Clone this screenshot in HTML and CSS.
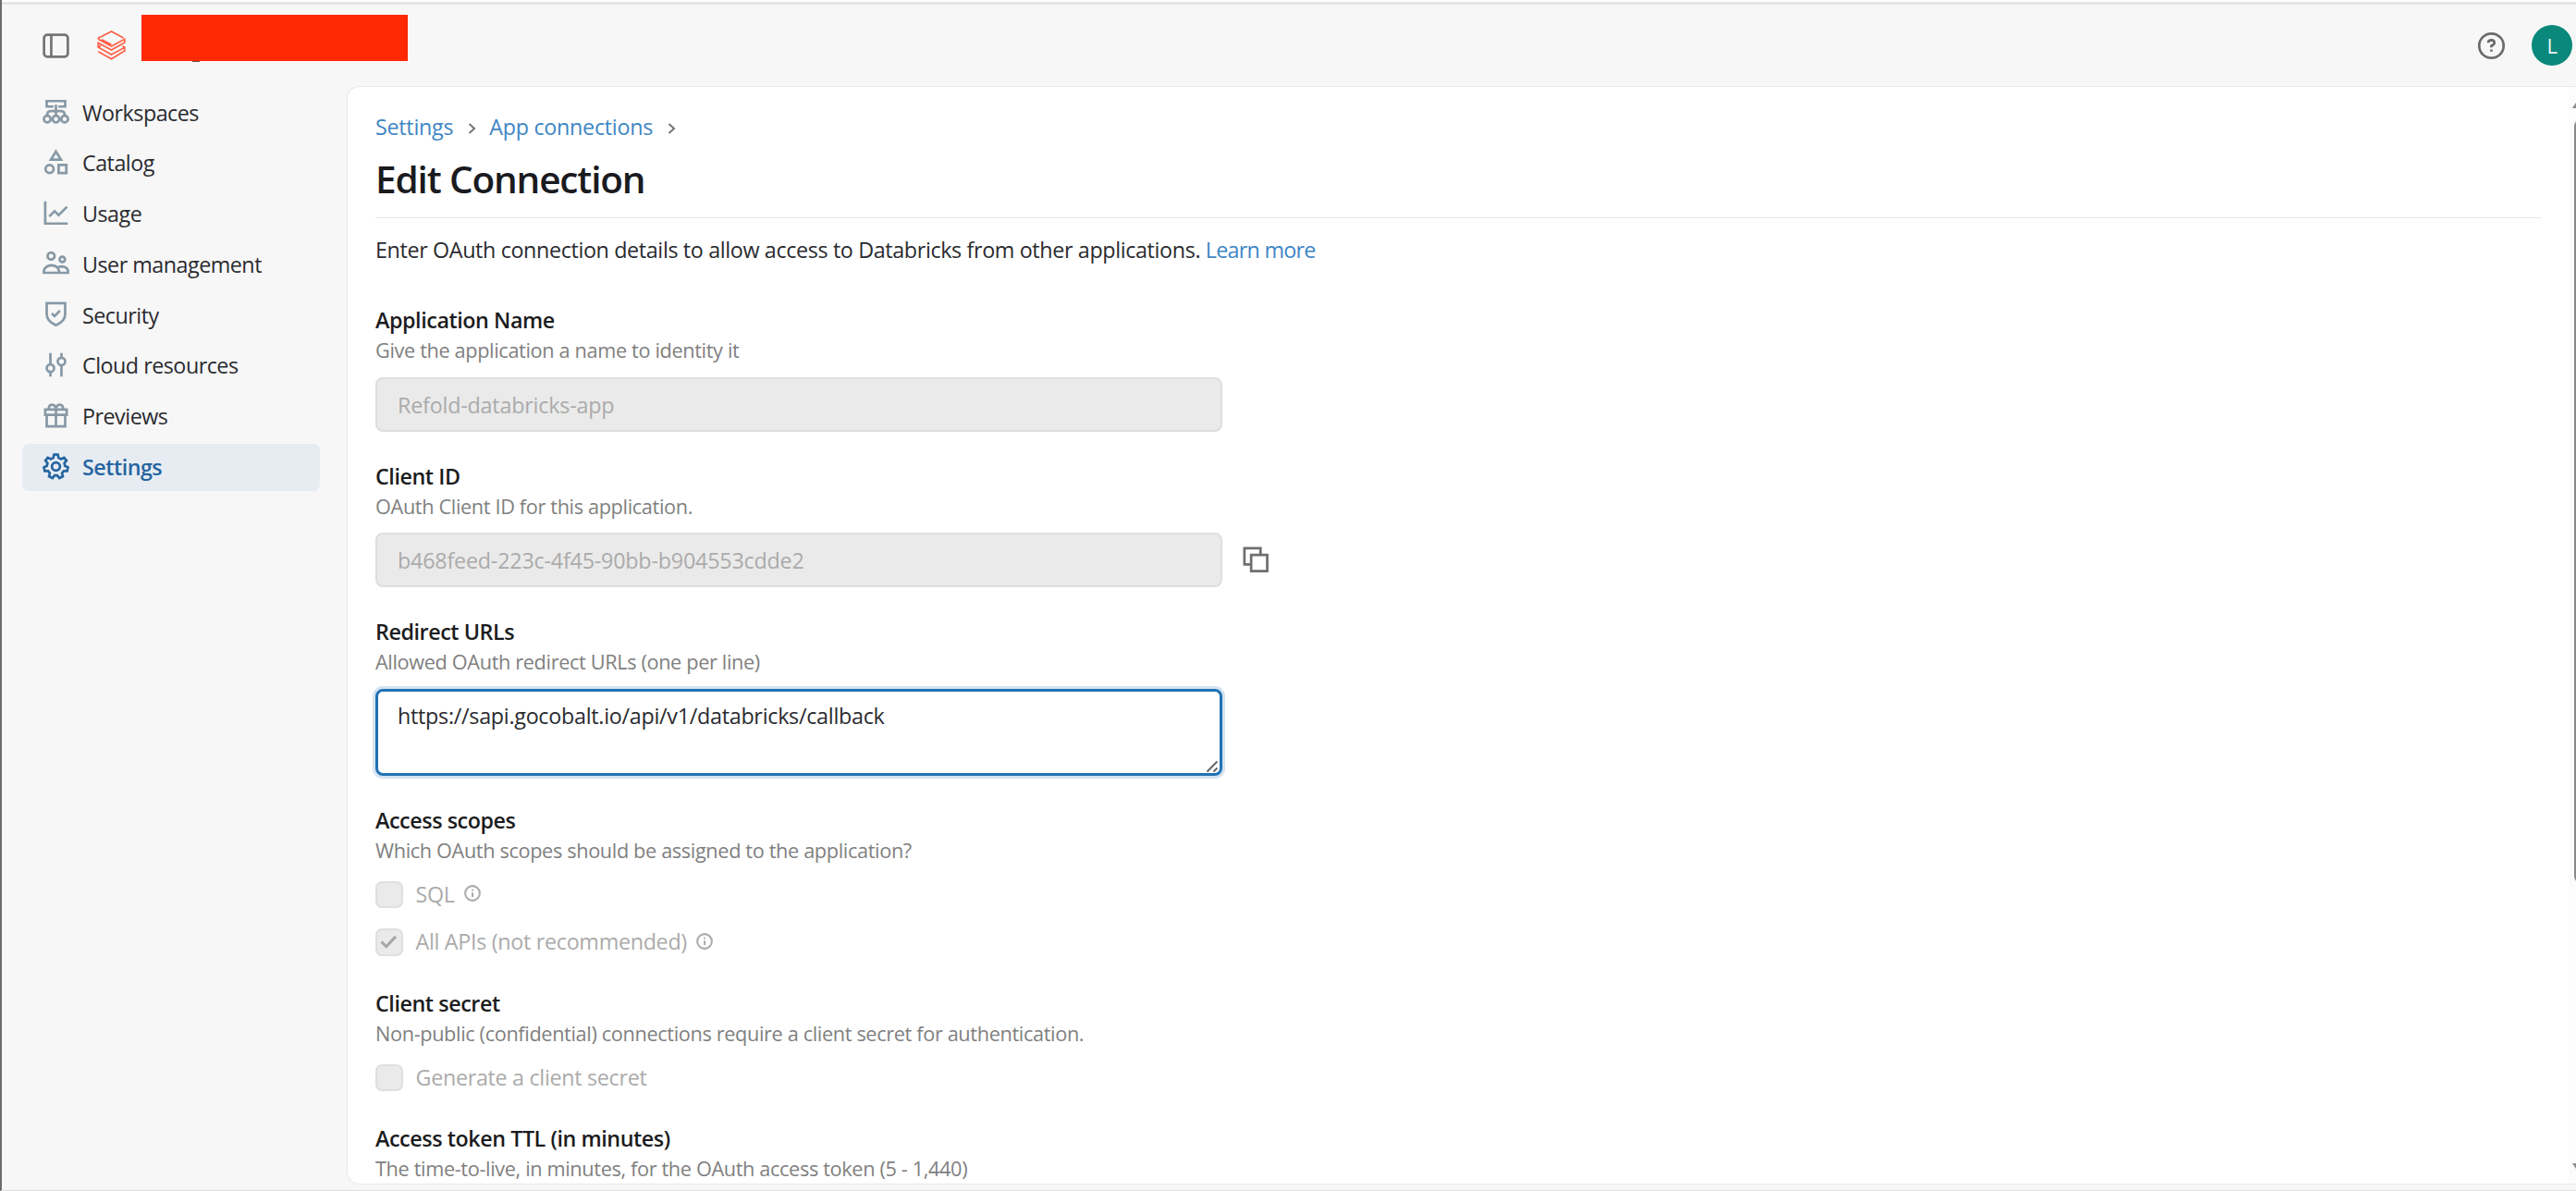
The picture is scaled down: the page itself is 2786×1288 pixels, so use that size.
FILE: index.html
```html
<!DOCTYPE html>
<html lang="en">
<head>
  <meta charset="UTF-8" />
  <title>Edit Connection</title>
  <link rel="stylesheet" href="styles.css">
</head>
<body>
  <header class="topbar">
    <svg class="icon toggle" viewBox="0 0 16 16"><rect x="0.9" y="1.5" width="14.2" height="13" rx="2"/><path d="M5.2 1.5V14.5"/></svg>
    <svg class="logo" viewBox="0 0 92 96"><path d="M3 28V25L46 3L85 24M3 28L46 51L89 28V39L46 63L3 40V54L46 78L89 55V66L46 92L3 68M14 29L46 46M3 40L46 63M3 54L12 49M89 55L82 50"/></svg>
    <div class="redacted"></div>
    <svg class="icon help" viewBox="0 0 16 16"><circle cx="8" cy="8" r="7.3"/><path d="M6.1 6.2Q6.2 4.6 8 4.6Q9.8 4.7 9.8 6.2Q9.8 7.3 8 8V8.9M8 10.2V11.4"/></svg>
    <div class="avatar">L</div>
  </header>

  <div class="layout">
    <!-- Sidebar -->
    <nav class="sidebar">
      <a class="nav-item"><svg class="icon" viewBox="0 0 16 16"><path d="M6.6 5.1H2.5V1.8H13.5V5.1H9.4M8 4V10.4M2.7 10.4Q2.7 7.8 5 7.8H11Q13.3 7.8 13.3 10.4"/><circle cx="2.8" cy="12.5" r="2"/><circle cx="8" cy="12.5" r="2"/><circle cx="13.2" cy="12.5" r="2"/></svg><span>Workspaces</span></a>
      <a class="nav-item"><svg class="icon" viewBox="0 0 16 16"><path d="M8 1.6L11 6.4H5ZM9.6 9.6H14.2V14.4H9.6Z"/><circle cx="4.2" cy="12" r="2.4"/></svg><span>Catalog</span></a>
      <a class="nav-item"><svg class="icon" viewBox="0 0 16 16"><path d="M1.6 1V14.2H15M4 10L7.2 6.8L9.6 9.2L14.6 4.2"/></svg><span>Usage</span></a>
      <a class="nav-item"><svg class="icon" viewBox="0 0 16 16"><circle cx="5.1" cy="3.8" r="2.1"/><circle cx="11.8" cy="5.8" r="1.6"/><path d="M0.8 13.8V12.6Q1.6 9.5 5.3 9.3Q9 9.5 9.8 12.4V13.8ZM8.6 10.8Q10 10 11.6 10Q14.4 10.2 15.2 12.4V13.8H9.8"/></svg><span>User management</span></a>
      <a class="nav-item"><svg class="icon" viewBox="0 0 16 16"><path d="M2.5 1.6H13.5V8Q13.5 12.4 8 14.8Q2.5 12.4 2.5 8ZM5.5 7.7L7.2 9.3L10.4 6.1"/></svg><span>Security</span></a>
      <a class="nav-item"><svg class="icon" viewBox="0 0 16 16"><path d="M4.7 1V7.7M4.7 12.3V15M11.3 1V3.7M11.3 8.3V15"/><circle cx="4.7" cy="10" r="2.2"/><circle cx="11.3" cy="6" r="2.2"/></svg><span>Cloud resources</span></a>
      <a class="nav-item"><svg class="icon" viewBox="0 0 16 16"><path d="M1.6 4.4H14.4V7.5H1.6ZM2.5 7.5V14.4H13.5V7.5M8 4.4V14.4M8 4.4Q7.8 1.5 5.7 1.5Q3.2 1.8 4 4.4M8 4.4Q8.2 1.5 10.3 1.5Q12.8 1.8 12 4.4"/></svg><span>Previews</span></a>
      <a class="nav-item active"><svg class="icon" viewBox="0 0 16 16"><path d="M6.42 2.84L6.87.89H9.13L9.58 2.84L11.05 3.54L12.85 2.68L14.26 4.44L13.02 6.01L13.39 7.61L15.18 8.49L14.68 10.69H12.68L11.66 11.97L12.1 13.92L10.07 14.9L8.82 13.34H7.18L5.93 14.9L3.9 13.92L4.34 11.97L3.32 10.69H1.32L.82 8.49L2.61 7.61L2.98 6.01L1.74 4.44L3.15 2.68L4.95 3.54Z"/><circle cx="8" cy="8" r="2.4"/></svg><span>Settings</span></a>
    </nav>

    <!-- Main panel -->
    <main class="panel">
      <div class="content">
        <div class="breadcrumb">
          <a>Settings</a>
          <svg class="chevron" viewBox="0 0 8 12"><path d="M1 1L6.5 6L1 11"/></svg>
          <a>App connections</a>
          <svg class="chevron" viewBox="0 0 8 12"><path d="M1 1L6.5 6L1 11"/></svg>
        </div>
        <h1>Edit Connection</h1>
        <p class="intro">Enter OAuth connection details to allow access to Databricks from other applications. <a class="learn-more">Learn more</a></p>

        <section class="field">
          <h2>Application Name</h2>
          <p class="hint">Give the application a name to identity it</p>
          <div class="input">Refold-databricks-app</div>
        </section>

        <section class="field">
          <h2>Client ID</h2>
          <p class="hint">OAuth Client ID for this application.</p>
          <div class="input-row">
            <div class="input">b468feed-223c-4f45-90bb-b904553cdde2</div>
            <svg class="icon copy" viewBox="0 0 16 16"><path d="M5.6 11.2H1.6V1.6H11.2V5.6M5.6 5.6H15.2V15.2H5.6Z"/></svg>
          </div>
        </section>

        <section class="field">
          <h2>Redirect URLs</h2>
          <p class="hint">Allowed OAuth redirect URLs (one per line)</p>
          <div class="textarea">
            https://sapi.gocobalt.io/api/v1/databricks/callback
            <svg class="grip" viewBox="0 0 14 14"><path d="M1.5 12.5L12.5 1.5M8.5 12.5L12.5 8.5"/></svg>
          </div>
        </section>

        <section class="field checks">
          <h2>Access scopes</h2>
          <p class="hint">Which OAuth scopes should be assigned to the application?</p>
          <div class="check-row">
            <div class="checkbox"></div><span>SQL</span>
            <svg class="icon info" viewBox="0 0 16 16"><circle cx="8" cy="8" r="7"/><path d="M8 7.3V11.6M8 4.2V5.8"/></svg>
          </div>
          <div class="check-row">
            <div class="checkbox"><svg viewBox="0 0 20 16"><path d="M1.5 8L7 13.5L18 2"/></svg></div><span>All APIs (not recommended)</span>
            <svg class="icon info" viewBox="0 0 16 16"><circle cx="8" cy="8" r="7"/><path d="M8 7.3V11.6M8 4.2V5.8"/></svg>
          </div>
        </section>

        <section class="field checks">
          <h2>Client secret</h2>
          <p class="hint">Non-public (confidential) connections require a client secret for authentication.</p>
          <div class="check-row">
            <div class="checkbox"></div><span>Generate a client secret</span>
          </div>
        </section>

        <section class="field">
          <h2>Access token TTL (in minutes)</h2>
          <p class="hint">The time-to-live, in minutes, for the OAuth access token (5 - 1,440)</p>
        </section>
      </div>
      <div class="scrollbar">
        <div class="arrow up"></div>
        <div class="thumb"></div>
        <div class="arrow down"></div>
      </div>
    </main>
  </div>
</body>
</html>
```
FILE: styles.css
```css
* {
  box-sizing: border-box;
}

body {
  margin: 0;
  height: 1288px;
  overflow: hidden;
  display: flex;
  flex-direction: column;
  background: #f7f7f7;
  border-left: 2px solid #6c6c6c;
  border-bottom: 1px solid #dedede;
  font-family: "Segoe UI", "Open Sans", sans-serif;
  font-size: 23.3px;
  letter-spacing: -0.36px;
  color: #2a2b2f;
}

h1, h2, p {
  margin: 0;
}

a {
  color: #3e86c4;
}

.icon {
  width: 29px;
  height: 29px;
  flex: none;
  fill: none;
  stroke: currentColor;
  stroke-width: 1.5;
  overflow: visible;
}

/* Top bar */
.topbar {
  height: 93px;
  flex: none;
  display: flex;
  align-items: center;
  padding: 3px 4px 0 44px;
  border-top: 2px solid #fff;
  box-shadow: inset 0 3px #e5e5ea;
}

.toggle {
  color: #757575;
}

.logo {
  width: 31px;
  height: 32px;
  margin-left: 30px;
  fill: none;
  stroke: #ff5f46;
  stroke-width: 5;
}

.redacted {
  position: relative;
  width: 288px;
  height: 50px;
  margin: 0 auto 17px 17px;
  background: #ff2903;
}

/* descenders showing under the block */
.redacted::after {
  content: "";
  position: absolute;
  left: 55px;
  top: 50px;
  width: 8px;
  height: 1px;
  background: #6b5048;
  box-shadow: 29px 0 0 -0.5px #8a7570;
}

.help {
  color: #6b6b6b;
  margin-right: 29px;
}

.avatar {
  width: 44px;
  height: 44px;
  border-radius: 50%;
  background: #09887b;
  color: #e8f4f3;
  font-size: 22px;
  line-height: 44px;
  text-align: center;
}

.layout {
  flex: 1;
  display: flex;
  min-height: 0;
}

/* Sidebar */
.sidebar {
  width: 373px;
  flex: none;
  padding: 3px 29px 0 22px;
  display: flex;
  flex-direction: column;
  gap: 3.8px;
}

.nav-item {
  height: 51px;
  flex: none;
  display: flex;
  align-items: center;
  gap: 14px;
  padding-left: 22px;
  border-radius: 7px;
  color: #2a2b2f;
  letter-spacing: -0.5px;
}

.nav-item .icon {
  color: #8899a6;
  margin-top: -2px;
}

.nav-item span {
  line-height: 30px;
  overflow: hidden;
}

.nav-item.active {
  background: #e7ecf3;
  color: #2565a0;
  font-weight: 650;
  letter-spacing: -0.5px;
}

.nav-item.active .icon {
  color: #2565a0;
}

/* Main panel */
.panel {
  flex: 1;
  display: flex;
  margin-bottom: 6px;
  background: #fff;
  border: 1px solid #e9e9e9;
  border-right: none;
  border-radius: 14px 0 0 14px;
  overflow: hidden;
}

.content {
  flex: 1;
  padding: 24px 30px 0 30px;
}

.breadcrumb {
  display: flex;
  align-items: center;
  line-height: 38px;
  letter-spacing: -0.27px;
}

.chevron {
  width: 9px;
  height: 12px;
  margin: 4px 14px 0 16px;
  fill: none;
  stroke: #757575;
  stroke-width: 2;
}

h1 {
  height: 80px;
  border-bottom: 1px solid #e6e6e6;
  font-size: 40.5px;
  line-height: 76px;
  font-weight: 600;
  letter-spacing: -1.15px;
  color: #1a1b1f;
}

.intro {
  padding: 15px 0 40px;
  line-height: 38px;
}

.learn-more {
  letter-spacing: -0.75px;
}

.field {
  margin-bottom: 31px;
}

.field h2 {
  font-size: 23.3px;
  line-height: 34px;
  font-weight: 650;
  letter-spacing: -0.43px;
  color: #1b1c20;
}

.hint {
  font-size: 21.7px;
  line-height: 31px;
  letter-spacing: -0.35px;
  color: #808080;
}

.input {
  width: 916px;
  height: 59px;
  margin-top: 13.5px;
  padding-left: 22px;
  border: 2px solid #dedede;
  border-radius: 8px;
  background: #eaeaea;
  color: #ababab;
  line-height: 56px;
  letter-spacing: -0.2px;
}

.input-row {
  display: flex;
  align-items: center;
}

.copy {
  color: #6f6f6f;
  margin: 12px 0 0 21px;
}

.textarea {
  position: relative;
  width: 916px;
  height: 94px;
  margin-top: 13.5px;
  padding: 9px 21px;
  border: 3px solid #2272b4;
  border-radius: 8px;
  box-shadow: 0 0 0 3px #d4e3f1;
  line-height: 34px;
  letter-spacing: -0.27px;
}

.grip {
  position: absolute;
  right: 1px;
  bottom: 0;
  width: 14px;
  height: 14px;
  stroke: #666;
  stroke-width: 2;
}

.checks {
  margin-bottom: 34px;
}

.check-row {
  display: flex;
  align-items: center;
  height: 29.5px;
  line-height: 29.5px;
  margin-top: 22px;
  color: #ababab;
  letter-spacing: -0.3px;
}

.hint + .check-row {
  margin-top: 18px;
}

.checkbox {
  width: 29.5px;
  height: 29.5px;
  margin-right: 14px;
  display: flex;
  align-items: center;
  justify-content: center;
  border: 2px solid #dfdfdf;
  border-radius: 7px;
  background: #eaeaea;
}

.checkbox svg {
  width: 19px;
  height: 15px;
  fill: none;
  stroke: #a6a6a6;
  stroke-width: 3.2;
}

.info {
  width: 18px;
  height: 18px;
  margin: -2px 0 0 10px;
  stroke-width: 1.8;
}

/* Scrollbar */
.scrollbar {
  width: 8px;
  padding: 14px 0 13px 6px;
  display: flex;
  flex-direction: column;
  background: #fcfcfc;
}

.arrow {
  width: 12px;
  height: 9px;
  flex: none;
  margin-left: -2px;
  background: #8b8b8b;
}

.up {
  clip-path: polygon(50% 0, 100% 100%, 0 100%);
}

.down {
  clip-path: polygon(0 0, 100% 0, 50% 100%);
}

.thumb {
  width: 12px;
  height: 824px;
  margin: 13px 0 auto;
  border-radius: 6px;
  background: #8b8b8b;
}
```
